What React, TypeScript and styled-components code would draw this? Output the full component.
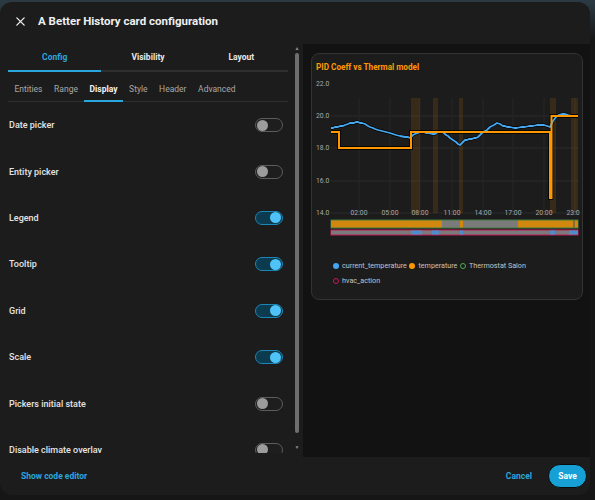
import React from "react";
import styled, { createGlobalStyle, css } from "styled-components";

const GlobalStyle = createGlobalStyle`
  html, body {
    margin: 0;
    padding: 0;
    background: #161a1d;
    font-family: Roboto, "Liberation Sans", sans-serif;
  }
  * { box-sizing: border-box; }
`;

const PRIMARY = "#29a6de";

const Page = styled.div`
  width: 595px;
  height: 500px;
  padding-top: 2px;
  background: linear-gradient(#2b3a42 0, #2b3a42 2px, #161616 40px);
`;

const Dialog = styled.div`
  width: 590px;
  height: 493px;
  background: #1c1c1c;
  border-radius: 12px;
  display: flex;
  flex-direction: column;
  overflow: hidden;
  color: #e1e1e1;
`;

const Header = styled.div`
  height: 42px;
  display: flex;
  align-items: center;
  gap: 12px;
  padding: 0 0 4px 15px;
`;

const Title = styled.h1`
  margin: 0;
  font-size: 11.5px;
  font-weight: 700;
  color: #f0f0f0;
`;

const Body = styled.div`
  flex: 1;
  display: flex;
  min-height: 0;
`;

const LeftPane = styled.div`
  width: 303px;
  display: flex;
`;

const Scroller = styled.div`
  width: 294px;
  height: 409px;
  overflow: hidden;
  padding: 0 6px 0 8px;
`;

const ScrollTrack = styled.div`
  width: 6px;
  height: 413px;
  display: flex;
  flex-direction: column;
  align-items: center;
  padding-top: 1px;
  color: #8a8a8a;
  font-size: 5px;
  line-height: 6px;
`;

const ScrollThumb = styled.div`
  width: 4px;
  height: 380px;
  margin: 2px 0 11px;
  border-radius: 2px;
  background: #6e6e6e;
`;

const TabBar = styled.div`
  display: flex;
  height: 28px;
  border-bottom: 2px solid #2f2f2f;
`;

const Tab = styled.div<{ $active?: boolean }>`
  flex: 1;
  display: flex;
  align-items: center;
  justify-content: center;
  font-size: 8.5px;
  font-weight: 700;
  color: ${(p) => (p.$active ? PRIMARY : "#e8e8e8")};
  margin-bottom: -2px;
  border-bottom: 2px solid ${(p) => (p.$active ? PRIMARY : "transparent")};
`;

const SubTabBar = styled.div`
  display: flex;
  height: 24px;
  margin-top: 6px;
  padding-left: 0.6px;
  border-bottom: 1px solid #2f2f2f;
`;

const SubTab = styled.div<{ $active?: boolean }>`
  display: flex;
  align-items: center;
  padding: 0 5.8px;
  font-size: 8.5px;
  margin-bottom: -1px;
  color: ${(p) => (p.$active ? "#f2f2f2" : "#a8a8a8")};
  font-weight: ${(p) => (p.$active ? 700 : 400)};
  border-bottom: 2px solid ${(p) => (p.$active ? PRIMARY : "transparent")};
`;

const Row = styled.div`
  height: 46.4px;
  display: flex;
  align-items: center;
  justify-content: space-between;
  padding: 0 5px 0 1px;
`;

const Label = styled.span`
  font-size: 9px;
  font-weight: 500;
  color: #e4e4e4;
`;

const Track = styled.div<{ $on?: boolean }>`
  width: 28px;
  height: 14px;
  border-radius: 7px;
  display: flex;
  align-items: center;
  padding: 0 1px;
  justify-content: ${(p) => (p.$on ? "flex-end" : "flex-start")};
  ${(p) =>
    p.$on
      ? css`
          background: #0c3a4e;
          border: 1.5px solid #1b86b8;
        `
      : css`
          background: #1e1e1e;
          border: 1.5px solid #5c5c5c;
        `}
`;

const Knob = styled.div<{ $on?: boolean }>`
  width: 11px;
  height: 11px;
  border-radius: 50%;
  background: ${(p) => (p.$on ? "#4fc3f7" : "#9c9c9c")};
`;

const RightPane = styled.div`
  flex: 1;
  background: #121212;
  padding: 9px 7px 0 8px;
`;

const Card = styled.div`
  width: 272px;
  height: 247px;
  border: 1px solid #333;
  border-radius: 8px;
  background: #1c1c1c;
  display: flex;
  flex-direction: column;
`;

const CardTitle = styled.div`
  padding: 8px 4px 0;
  height: 18px;
  line-height: 10px;
  font-size: 8.2px;
  font-weight: 700;
  color: #ff9800;
`;

const Chart = styled.svg`
  display: block;
  margin-top: 4px;
  font-family: Roboto, "Liberation Sans", sans-serif;
`;

const Legend = styled.div`
  display: flex;
  flex-wrap: wrap;
  padding: 18px 40px 0 21px;
  column-gap: 2.5px;
`;

const LegendItem = styled.div`
  display: flex;
  align-items: center;
  gap: 3px;
  height: 15px;
  font-size: 7.2px;
  color: #c4c4c4;
`;

const Dot = styled.span<{ $color: string; $ring?: boolean }>`
  width: 6px;
  height: 6px;
  border-radius: 50%;
  ${(p) =>
    p.$ring
      ? css`
          border: 1.2px solid ${p.$color};
        `
      : css`
          background: ${p.$color};
        `}
`;

const Footer = styled.div`
  height: 38px;
  display: flex;
  align-items: center;
  justify-content: space-between;
  padding: 0 3px 0 21px;
`;

const LinkButton = styled.button`
  background: none;
  border: none;
  padding: 0;
  font-family: inherit;
  font-size: 8.5px;
  font-weight: 700;
  color: ${PRIMARY};
`;

const Actions = styled.div`
  display: flex;
  align-items: center;
  gap: 16px;
`;

const SaveButton = styled.button`
  width: 39px;
  height: 24px;
  border-radius: 12px;
  border: 1px solid #0b0b0b;
  background: #16a0d6;
  color: #fff;
  font-family: inherit;
  font-size: 8.5px;
  font-weight: 700;
`;

const rows = [
  { label: "Date picker", on: false },
  { label: "Entity picker", on: false },
  { label: "Legend", on: true },
  { label: "Tooltip", on: true },
  { label: "Grid", on: true },
  { label: "Scale", on: true },
  { label: "Pickers initial state", on: false },
  { label: "Disable climate overlay", on: false },
];

const subTabs = ["Entities", "Range", "Display", "Style", "Header", "Advanced"];

const yLabels = [
  { t: "22.0", y: 8 },
  { t: "20.0", y: 40 },
  { t: "18.0", y: 72 },
  { t: "16.0", y: 105 },
  { t: "14.0", y: 137 },
];

const xLabels = [
  { t: "02:00", x: 47 },
  { t: "05:00", x: 78 },
  { t: "08:00", x: 108 },
  { t: "11:00", x: 140 },
  { t: "14:00", x: 171 },
  { t: "17:00", x: 201 },
  { t: "20:00", x: 232 },
  { t: "23:00", x: 263 },
];

const heating = [
  [99, 108],
  [121, 126],
  [147, 151],
  [238, 244],
  [259, 266],
];

const bar1 = [
  { a: 19, b: 130, c: "#d2870f" },
  { a: 130, b: 148, c: "#7b7b7b" },
  { a: 148, b: 151, c: "#d2870f" },
  { a: 151, b: 206, c: "#7b7b7b" },
  { a: 206, b: 261, c: "#d2870f" },
  { a: 261, b: 263, c: "#8a6a3a" },
  { a: 263, b: 266, c: "#d2870f" },
];

const bar2Blue = [
  [99, 110],
  [120, 127],
  [148, 151],
  [238, 243],
  [257, 266],
];

const bluePts = [
  [19, 52], [21, 52], [23, 51], [26, 51], [28, 50], [31, 50], [33, 49], [36, 48],
  [38, 47], [42, 47], [44, 46], [46, 46], [48, 47], [50, 47], [53, 48], [56, 50],
  [58, 51], [61, 52], [63, 53], [66, 54], [70, 55], [74, 56], [78, 57], [81, 58],
  [84, 59], [88, 60], [93, 61], [96, 61], [98, 62], [101, 59], [103, 58], [106, 57],
  [108, 56], [112, 56], [114, 57], [116, 57], [120, 58], [123, 58], [126, 56],
  [130, 56], [132, 57], [134, 59], [136, 60], [138, 62], [141, 64], [144, 66],
  [146, 68], [148, 69], [151, 66], [153, 64], [155, 64], [157, 63], [160, 63],
  [162, 62], [164, 62], [166, 61], [169, 58], [171, 56], [173, 55], [175, 54],
  [178, 51], [180, 50], [182, 49], [185, 47], [188, 48], [191, 50], [193, 50],
  [195, 51], [198, 51], [202, 52], [205, 52], [209, 51], [213, 51], [217, 50],
  [221, 50], [225, 49], [228, 49], [232, 49], [235, 50], [238, 51], [241, 45],
  [244, 41], [247, 39], [250, 38], [253, 38], [256, 39], [260, 40], [266, 40],
];

const orangePath = "M19 56 H27 V72 H99 V56 H238 V122 H239.5 V40 H266";

function TemperatureChart() {
  const blue = "M" + bluePts.map((p) => p.join(" ")).join(" L");
  return (
    <Chart width={268} height={164} viewBox="0 0 268 164">
      {[40, 72, 105, 137].map((y) => (
        <line key={y} x1={19} x2={266} y1={y} y2={y} stroke="#2b2b2b" strokeWidth={1} />
      ))}
      {xLabels.map((l) => (
        <line key={l.t} x1={l.x} x2={l.x} y1={22} y2={137} stroke="#262626" strokeWidth={1} />
      ))}
      {heating.map(([a, b]) => (
        <rect key={a} x={a} y={22} width={b - a} height={115} fill="rgba(255,152,0,0.12)" />
      ))}
      {yLabels.map((l) => (
        <text key={l.t} x={4} y={l.y} dominantBaseline="middle" fontSize={6.8} fill="#a9a9a9">
          {l.t}
        </text>
      ))}
      {xLabels.map((l) => (
        <text key={l.t} x={l.x} y={137} textAnchor="middle" dominantBaseline="middle" fontSize={6.8} fill="#a9a9a9">
          {l.t}
        </text>
      ))}
      <path d={orangePath} fill="none" stroke="#000" strokeWidth={3.6} />
      <path d={blue} fill="none" stroke="#000" strokeWidth={3} strokeLinejoin="round" />
      <path d={blue} fill="none" stroke="#45a8f0" strokeWidth={1.8} strokeLinejoin="round" />
      <path d={orangePath} fill="none" stroke="#ff9800" strokeWidth={2} />
      <rect x={18.5} y={143.5} width={248} height={9} fill="#3e7d3e" />
      {bar1.map((s) => (
        <rect key={s.a} x={s.a} y={144.5} width={s.b - s.a} height={7} fill={s.c} />
      ))}
      <rect x={18.5} y={153.5} width={248} height={6} fill="#c2185b" />
      <rect x={19} y={154.5} width={247} height={4} fill="#7a7a7a" />
      {bar2Blue.map(([a, b]) => (
        <rect key={a} x={a} y={154.5} width={b - a} height={4} fill="#4f8cc9" />
      ))}
    </Chart>
  );
}

function CloseIcon() {
  return (
    <svg width="11" height="11" viewBox="0 0 24 24">
      <path d="M4 4 L20 20 M20 4 L4 20" stroke="#f0f0f0" strokeWidth="2.8" strokeLinecap="round" />
    </svg>
  );
}

export default function App() {
  return (
    <Page>
      <GlobalStyle />
      <Dialog>
        <Header>
          <CloseIcon />
          <Title>A Better History card configuration</Title>
        </Header>
        <Body>
          <LeftPane>
            <Scroller>
              <TabBar>
                <Tab $active>Config</Tab>
                <Tab>Visibility</Tab>
                <Tab>Layout</Tab>
              </TabBar>
              <SubTabBar>
                {subTabs.map((t) => (
                  <SubTab key={t} $active={t === "Display"}>
                    {t}
                  </SubTab>
                ))}
              </SubTabBar>
              {rows.map((r) => (
                <Row key={r.label}>
                  <Label>{r.label}</Label>
                  <Track $on={r.on}>
                    <Knob $on={r.on} />
                  </Track>
                </Row>
              ))}
            </Scroller>
            <ScrollTrack>
              <span>▲</span>
              <ScrollThumb />
              <span>▼</span>
            </ScrollTrack>
          </LeftPane>
          <RightPane>
            <Card>
              <CardTitle>PID Coeff vs Thermal model</CardTitle>
              <TemperatureChart />
              <Legend>
                <LegendItem>
                  <Dot $color="#42a5f5" />
                  current_temperature
                </LegendItem>
                <LegendItem>
                  <Dot $color="#ff9800" />
                  temperature
                </LegendItem>
                <LegendItem>
                  <Dot $color="#4caf50" $ring />
                  Thermostat Salon
                </LegendItem>
                <LegendItem>
                  <Dot $color="#c2185b" $ring />
                  hvac_action
                </LegendItem>
              </Legend>
            </Card>
          </RightPane>
        </Body>
        <Footer>
          <LinkButton>Show code editor</LinkButton>
          <Actions>
            <LinkButton>Cancel</LinkButton>
            <SaveButton>Save</SaveButton>
          </Actions>
        </Footer>
      </Dialog>
    </Page>
  );
}
